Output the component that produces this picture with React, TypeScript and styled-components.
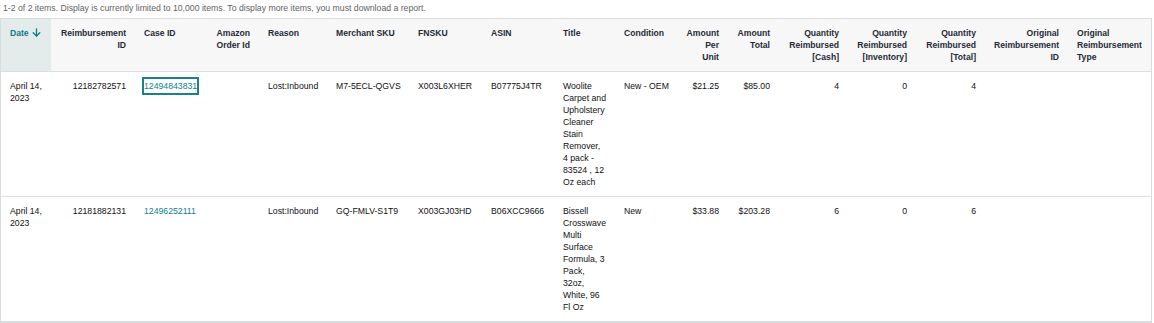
import React from "react";
import styled, { createGlobalStyle } from "styled-components";

const GlobalStyle = createGlobalStyle`
  html, body { margin: 0; padding: 0; background: #ffffff; }
  body { font-family: "Liberation Sans", Arial, sans-serif; }
`;

const COLS = "50px 84px 72px 52px 68px 82px 73px 72px 61px 62px 51px 51px 69px 68px 69px 83px 83px";

const Page = styled.div`
  width: 1154px;
  display: flex;
  flex-direction: column;
`;

const Summary = styled.div`
  font-family: "Liberation Sans", Arial, sans-serif;
  font-size: 8.7px;
  line-height: 12px;
  color: #5f6363;
  padding: 2px 0 0 3px;
  height: 16px;
`;

const Table = styled.div`
  width: 1150px;
  border: 1px solid #d9dcdc;
  border-bottom-width: 2px;
  display: flex;
  flex-direction: column;
`;

const HeadRow = styled.div`
  display: grid;
  grid-template-columns: ${COLS};
  background: #f7f7f7;
  border-bottom: 1px solid #dcdfdf;
`;

const BodyRow = styled.div<{ $last?: boolean }>`
  display: grid;
  grid-template-columns: ${COLS};
  background: #ffffff;
  border-bottom: ${(p) => (p.$last ? "0" : "1px solid #dcdfdf")};
`;

const HeadCell = styled.div<{ $right?: boolean; $sorted?: boolean }>`
  padding: 8px 9px 8px 9px;
  min-height: 36px;
  font-family: "Liberation Sans", Arial, sans-serif;
  font-weight: 700;
  font-size: 8.6px;
  line-height: 12px;
  white-space: nowrap;
  color: ${(p) => (p.$sorted ? "#0f7a88" : "#1f2a36")};
  background: ${(p) => (p.$sorted ? "#e3ebeb" : "transparent")};
  text-align: ${(p) => (p.$right ? "right" : "left")};
`;

const Cell = styled.div<{ $right?: boolean; $wrap?: boolean }>`
  padding: 8px 9px;
  min-height: 108px;
  font-family: "Liberation Sans", Arial, sans-serif;
  font-size: 8.7px;
  line-height: 12px;
  color: #0f1111;
  white-space: ${(p) => (p.$wrap ? "normal" : "nowrap")};
  text-align: ${(p) => (p.$right ? "right" : "left")};
`;

const Link = styled.a<{ $focused?: boolean }>`
  color: #0f7f8f;
  text-decoration: none;
  display: inline-block;
  outline: ${(p) => (p.$focused ? "2px solid #1b7f8c" : "none")};
  padding: ${(p) => (p.$focused ? "1px 0" : "0")};
  margin-top: ${(p) => (p.$focused ? "-1px" : "0")};
`;

const SortIcon = styled.svg`
  width: 9px;
  height: 9px;
  margin-left: 3px;
  vertical-align: -1px;
`;

type Col = { label: React.ReactNode; right?: boolean };

const headers: Col[] = [
  { label: "Date" },
  { label: <>Reimbursement<br />ID</>, right: true },
  { label: "Case ID" },
  { label: <>Amazon<br />Order Id</>, right: true },
  { label: "Reason" },
  { label: "Merchant SKU" },
  { label: "FNSKU" },
  { label: "ASIN" },
  { label: "Title" },
  { label: "Condition" },
  { label: <>Amount<br />Per<br />Unit</>, right: true },
  { label: <>Amount<br />Total</>, right: true },
  { label: <>Quantity<br />Reimbursed<br />[Cash]</>, right: true },
  { label: <>Quantity<br />Reimbursed<br />[Inventory]</>, right: true },
  { label: <>Quantity<br />Reimbursed<br />[Total]</>, right: true },
  { label: <>Original<br />Reimbursement<br />ID</>, right: true },
  { label: <>Original<br />Reimbursement<br />Type</> },
];

type Row = {
  date: string;
  reimbId: string;
  caseId: string;
  focused?: boolean;
  orderId: string;
  reason: string;
  sku: string;
  fnsku: string;
  asin: string;
  title: string;
  condition: string;
  perUnit: string;
  total: string;
  cash: string;
  inv: string;
  qtyTotal: string;
};

const rows: Row[] = [
  {
    date: "April 14, 2023",
    reimbId: "12182782571",
    caseId: "12494843831",
    focused: true,
    orderId: "",
    reason: "Lost:Inbound",
    sku: "M7-5ECL-QGVS",
    fnsku: "X003L6XHER",
    asin: "B07775J4TR",
    title: "Woolite Carpet and Upholstery Cleaner Stain Remover, 4 pack - 83524 , 12 Oz each",
    condition: "New - OEM",
    perUnit: "$21.25",
    total: "$85.00",
    cash: "4",
    inv: "0",
    qtyTotal: "4",
  },
  {
    date: "April 14, 2023",
    reimbId: "12181882131",
    caseId: "12496252111",
    orderId: "",
    reason: "Lost:Inbound",
    sku: "GQ-FMLV-S1T9",
    fnsku: "X003GJ03HD",
    asin: "B06XCC9666",
    title: "Bissell Crosswave Multi Surface Formula, 3 Pack, 32oz, White, 96 Fl Oz",
    condition: "New",
    perUnit: "$33.88",
    total: "$203.28",
    cash: "6",
    inv: "0",
    qtyTotal: "6",
  },
];

export default function App() {
  return (
    <Page>
      <GlobalStyle />
      <Summary>
        1-2 of 2 items. Display is currently limited to 10,000 items. To display more items, you must download a report.
      </Summary>
      <Table>
        <HeadRow>
          {headers.map((h, i) => (
            <HeadCell key={i} $right={h.right} $sorted={i === 0}>
              {h.label}
              {i === 0 && (
                <SortIcon viewBox="0 0 9 9" fill="none" stroke="#0f7a88" strokeWidth="1.3" strokeLinecap="round" strokeLinejoin="round">
                  <path d="M4.5 0.8 V8" />
                  <path d="M1.2 4.8 L4.5 8 L7.8 4.8" />
                </SortIcon>
              )}
            </HeadCell>
          ))}
        </HeadRow>
        {rows.map((r, i) => (
          <BodyRow key={i} $last={i === rows.length - 1}>
            <Cell $wrap>{r.date}</Cell>
            <Cell $right>{r.reimbId}</Cell>
            <Cell>
              <Link href="#" $focused={r.focused}>{r.caseId}</Link>
            </Cell>
            <Cell $right>{r.orderId}</Cell>
            <Cell>{r.reason}</Cell>
            <Cell>{r.sku}</Cell>
            <Cell>{r.fnsku}</Cell>
            <Cell>{r.asin}</Cell>
            <Cell $wrap>{r.title}</Cell>
            <Cell>{r.condition}</Cell>
            <Cell $right>{r.perUnit}</Cell>
            <Cell $right>{r.total}</Cell>
            <Cell $right>{r.cash}</Cell>
            <Cell $right>{r.inv}</Cell>
            <Cell $right>{r.qtyTotal}</Cell>
            <Cell $right></Cell>
            <Cell></Cell>
          </BodyRow>
        ))}
      </Table>
    </Page>
  );
}
